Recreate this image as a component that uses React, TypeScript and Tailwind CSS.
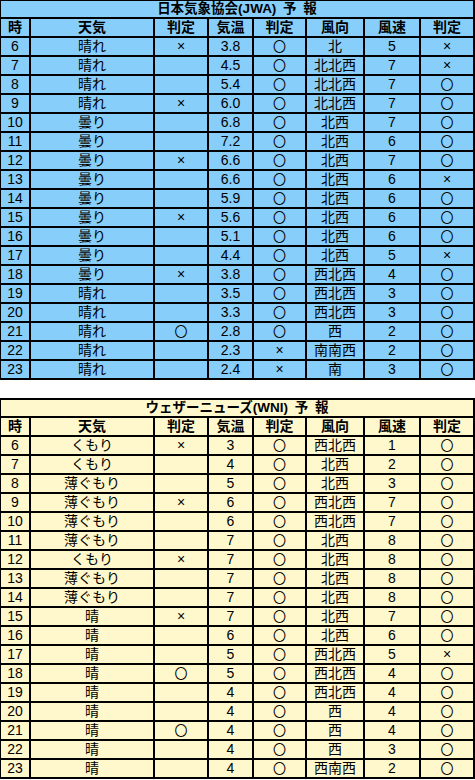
import React from "react";

type Row = [string, string, string, string, string, string, string, string];

const O = "〇";
const X = "×";

const jwa: Row[] = [
  ["6", "晴れ", X, "3.8", O, "北", "5", X],
  ["7", "晴れ", "", "4.5", O, "北北西", "7", X],
  ["8", "晴れ", "", "5.4", O, "北北西", "7", O],
  ["9", "晴れ", X, "6.0", O, "北北西", "7", O],
  ["10", "曇り", "", "6.8", O, "北西", "7", O],
  ["11", "曇り", "", "7.2", O, "北西", "6", O],
  ["12", "曇り", X, "6.6", O, "北西", "7", O],
  ["13", "曇り", "", "6.6", O, "北西", "6", X],
  ["14", "曇り", "", "5.9", O, "北西", "6", O],
  ["15", "曇り", X, "5.6", O, "北西", "6", O],
  ["16", "曇り", "", "5.1", O, "北西", "6", O],
  ["17", "曇り", "", "4.4", O, "北西", "5", X],
  ["18", "曇り", X, "3.8", O, "西北西", "4", O],
  ["19", "晴れ", "", "3.5", O, "西北西", "3", O],
  ["20", "晴れ", "", "3.3", O, "西北西", "3", O],
  ["21", "晴れ", O, "2.8", O, "西", "2", O],
  ["22", "晴れ", "", "2.3", X, "南南西", "2", O],
  ["23", "晴れ", "", "2.4", X, "南", "3", O],
];

const wni: Row[] = [
  ["6", "くもり", X, "3", O, "西北西", "1", O],
  ["7", "くもり", "", "4", O, "北西", "2", O],
  ["8", "薄ぐもり", "", "5", O, "北西", "3", O],
  ["9", "薄ぐもり", X, "6", O, "西北西", "7", O],
  ["10", "薄ぐもり", "", "6", O, "西北西", "7", O],
  ["11", "薄ぐもり", "", "7", O, "北西", "8", O],
  ["12", "くもり", X, "7", O, "北西", "8", O],
  ["13", "薄ぐもり", "", "7", O, "北西", "8", O],
  ["14", "薄ぐもり", "", "7", O, "北西", "8", O],
  ["15", "晴", X, "7", O, "北西", "7", O],
  ["16", "晴", "", "6", O, "北西", "6", O],
  ["17", "晴", "", "5", O, "西北西", "5", X],
  ["18", "晴", O, "5", O, "西北西", "4", O],
  ["19", "晴", "", "4", O, "西北西", "4", O],
  ["20", "晴", "", "4", O, "西", "4", O],
  ["21", "晴", O, "4", O, "西", "4", O],
  ["22", "晴", "", "4", O, "西", "3", O],
  ["23", "晴", "", "4", O, "西南西", "2", O],
];

const headers = ["時", "天気", "判定", "気温", "判定", "風向", "風速", "判定"];

function Table({
  title,
  rows,
  bg,
  top,
}: {
  title: string;
  rows: Row[];
  bg: string;
  top: string;
}) {
  return (
    <div
      className={`grid grid-cols-[28px_122px_52px_43px_51px_56px_54px_52px] grid-rows-[16px] auto-rows-[17px] gap-[2px] bg-black pl-[1px] pr-[2px] pb-[2px] ${top}`}
    >
      <div
        className={`col-span-8 ${bg} flex items-center justify-center text-[13.5px] font-bold leading-[16px] whitespace-pre`}
      >
        {title}
      </div>
      {headers.map((h, i) => (
        <div
          key={"h" + i}
          className={`${bg} flex items-center justify-center text-[14px] font-bold leading-[17px]`}
        >
          {h}
        </div>
      ))}
      {rows.map((r, ri) =>
        r.map((c, ci) => (
          <div
            key={ri + "-" + ci}
            className={`${bg} flex items-center justify-center leading-[17px] ${
              c === O ? "text-[13px]" : "text-[14px]"
            }`}
          >
            {c}
          </div>
        ))
      )}
    </div>
  );
}

export default function App() {
  return (
    <div
      className="w-[475px] bg-white text-black"
      style={{
        fontFamily: '"Liberation Sans", "Noto Sans CJK JP", sans-serif',
      }}
    >
      <Table
        title={"日本気象協会(JWA)\u2002予\u2002報"}
        rows={jwa}
        bg="bg-[#87cefa]"
        top="pt-[1px]"
      />
      <div className="h-[18px]" />
      <Table
        title={"ウェザーニューズ(WNI)\u2002予\u2002報"}
        rows={wni}
        bg="bg-[#fff8cc]"
        top="pt-[2px]"
      />
    </div>
  );
}
